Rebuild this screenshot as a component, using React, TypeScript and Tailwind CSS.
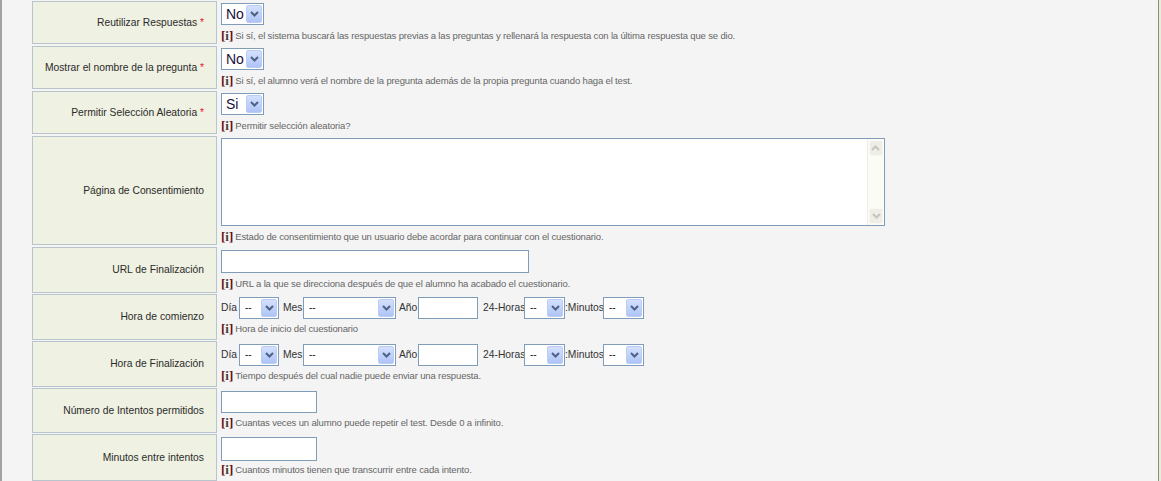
import React from "react";

const F = { fontFamily: '"Liberation Sans", Arial, sans-serif' };

function Chevron({ color = "#4d6185" }: { color?: string }) {
  return (
    <svg width="9" height="6" viewBox="0 0 9 6">
      <path d="M1 1 L4.5 4.5 L8 1" fill="none" stroke={color} strokeWidth="2" />
    </svg>
  );
}

function Sel({ text, cls, big }: { text: string; cls: string; big?: boolean }) {
  return (
    <div className={"flex shrink-0 items-stretch border border-[#7f9db9] bg-white h-[22px] " + cls}>
      <span
        className={
          big
            ? "flex items-center pl-[4px] text-[14px] text-[#1a0f3a] leading-none"
            : "flex items-center pl-[5px] text-[10px] text-[#111] leading-none"
        }
      >
        {text}
      </span>
      <div className="ml-auto my-[1px] mr-[1px] w-[16px] rounded-[2px] border border-[#bccdf5] bg-linear-to-b from-[#d4e0fd] to-[#aec4f6] flex items-center justify-center">
        <Chevron />
      </div>
    </div>
  );
}

function Info({ children, cls = "" }: { children: React.ReactNode; cls?: string }) {
  return (
    <div className={"flex items-center h-[13px] text-[9.5px] tracking-[-0.15px] text-[#666] leading-none whitespace-nowrap " + cls}>
      <span
        className="font-bold text-[13px] mr-[2px] leading-none tracking-normal"
        style={{ fontFamily: '"Liberation Serif", "Times New Roman", serif' }}
      >
        <span className="text-[#6b0f0f]">[</span>
        <span className="text-[#444]">i</span>
        <span className="text-[#6b0f0f]">]</span>
      </span>
      <span>{children}</span>
    </div>
  );
}

function Label({ text, req }: { text: string; req?: boolean }) {
  return (
    <div className="w-[185px] h-full shrink-0 border border-[#b9c5cc] bg-[#eff1e2] flex items-center justify-end pr-[12px] text-[10.3px] text-[#2b2b2b]">
      <span>
        {text}
        {req && <span className="text-[#e8202a]"> *</span>}
      </span>
    </div>
  );
}

function Row({
  cls,
  label,
  req,
  children,
}: {
  cls: string;
  label: string;
  req?: boolean;
  children: React.ReactNode;
}) {
  return (
    <div className={"flex shrink-0 " + cls}>
      <Label text={label} req={req} />
      <div className="ml-[4px] flex flex-col">{children}</div>
    </div>
  );
}

function Input({ cls }: { cls: string }) {
  return <div className={"shrink-0 border border-[#7f9db9] bg-white " + cls} />;
}

function DateRow() {
  return (
    <div className="flex items-center text-[10.3px] text-[#333] whitespace-nowrap">
      <span className="w-[18px]">Día</span>
      <Sel text="--" cls="w-[40px]" />
      <span className="ml-[4px] w-[20px]">Mes</span>
      <Sel text="--" cls="w-[93px]" />
      <span className="ml-[3px] w-[19px]">Año</span>
      <Input cls="w-[60px] h-[22px]" />
      <span className="ml-[5px] w-[41px]">24-Horas</span>
      <Sel text="--" cls="w-[41px]" />
      <span className="w-[38px]">:Minutos</span>
      <Sel text="--" cls="w-[41px]" />
    </div>
  );
}

export default function App() {
  return (
    <div className="flex w-[1161px] h-[481px] overflow-hidden bg-[#f4f4f4]" style={F}>
      <div className="w-[2px] shrink-0 bg-[#a2a2a2]" />
      <div className="flex-1 flex flex-col pl-[30px] pt-[1px]">
        <Row cls="h-[45px] pb-[2px]" label="Reutilizar Respuestas" req>
          <Sel text="No" big cls="w-[43px] mt-[2px]" />
          <Info cls="mt-[4px]">
            Si sí, el sistema buscará las respuestas previas a las preguntas y rellenará la respuesta con la última respuesta que se dio.
          </Info>
        </Row>
        <Row cls="h-[45px] pb-[2px]" label="Mostrar el nombre de la pregunta" req>
          <Sel text="No" big cls="w-[43px] mt-[2px]" />
          <Info cls="mt-[4px]">
            Si sí, el alumno verá el nombre de la pregunta además de la propia pregunta cuando haga el test.
          </Info>
        </Row>
        <Row cls="h-[45px] pb-[2px]" label="Permitir Selección Aleatoria" req>
          <Sel text="Si" big cls="w-[43px] mt-[2px]" />
          <Info cls="mt-[4px]">Permitir selección aleatoria?</Info>
        </Row>
        <Row cls="h-[111px] pb-[2px]" label="Página de Consentimiento">
          <div className="mt-[2px] w-[664px] h-[88px] border border-[#7f9db9] bg-white flex justify-end">
            <div className="w-[17px] h-full bg-[#fcfcf7] border-l border-[#eeeee6] flex flex-col justify-between">
              <div className="h-[16px] m-[1px] rounded-[2px] bg-[#eeede6] border border-[#f8f8f4] flex items-center justify-center rotate-180">
                <Chevron color="#c4c4c0" />
              </div>
              <div className="h-[16px] m-[1px] rounded-[2px] bg-[#eeede6] border border-[#f8f8f4] flex items-center justify-center">
                <Chevron color="#c4c4c0" />
              </div>
            </div>
          </div>
          <Info cls="mt-[4px]">
            Estado de consentimiento que un usuario debe acordar para continuar con el cuestionario.
          </Info>
        </Row>
        <Row cls="h-[47px] pb-[1px]" label="URL de Finalización">
          <Input cls="mt-[3px] w-[308px] h-[23px]" />
          <Info cls="mt-[4px]">
            URL a la que se direcciona después de que el alumno ha acabado el cuestionario.
          </Info>
        </Row>
        <Row cls="h-[47px] pb-[1px]" label="Hora de comienzo">
          <div className="mt-[3px]">
            <DateRow />
          </div>
          <Info cls="mt-[3px]">Hora de inicio del cuestionario</Info>
        </Row>
        <Row cls="h-[47px] pb-[1px]" label="Hora de Finalización">
          <div className="mt-[3px]">
            <DateRow />
          </div>
          <Info cls="mt-[3px]">Tiempo después del cual nadie puede enviar una respuesta.</Info>
        </Row>
        <Row cls="h-[46px] pb-[1px]" label="Número de Intentos permitidos">
          <Input cls="mt-[3px] w-[96px] h-[22px]" />
          <Info cls="mt-[3px]">Cuantas veces un alumno puede repetir el test. Desde 0 a infinito.</Info>
        </Row>
        <Row cls="h-[47px]" label="Minutos entre intentos">
          <Input cls="mt-[3px] w-[96px] h-[24px]" />
          <Info cls="mt-[2px]">Cuantos minutos tienen que transcurrir entre cada intento.</Info>
        </Row>
      </div>
      <div className="w-[1px] shrink-0 bg-[#8c8c8c]" />
      <div className="w-[2px] shrink-0 bg-[#e6eed8]" />
    </div>
  );
}
